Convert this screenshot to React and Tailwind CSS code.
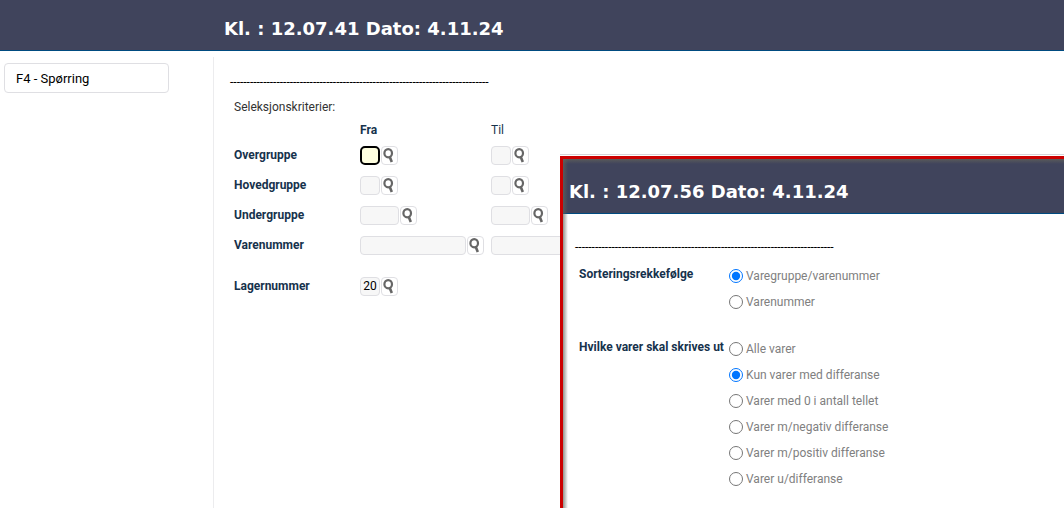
import React, { useState } from 'react';

const DASHES = '-'.repeat(78);

const criteria = [
  { id: 'overgruppe', label: 'Overgruppe', width: 'w-5' },
  { id: 'hovedgruppe', label: 'Hovedgruppe', width: 'w-5' },
  { id: 'undergruppe', label: 'Undergruppe', width: 'w-[39px]' },
  { id: 'varenummer', label: 'Varenummer', width: 'w-[106px]' },
];

const sortOptions = ['Varegruppe/varenummer', 'Varenummer'];

const itemOptions = [
  'Alle varer',
  'Kun varer med differanse',
  'Varer med 0 i antall tellet',
  'Varer m/negativ differanse',
  'Varer m/positiv differanse',
  'Varer u/differanse',
];

function Header({ title, className }) {
  return (
    <header className={`border-b border-[#004b80] bg-[#40445c] text-white ${className}`}>
      <h1 className="font-['DejaVu_Sans',sans-serif] text-lg leading-6 font-bold whitespace-nowrap">{title}</h1>
    </header>
  );
}

function SearchIcon() {
  return (
    <svg viewBox="0 0 15 17" className="h-[17px] w-[15px]" fill="none" stroke="#666">
      <ellipse cx="6.2" cy="6.2" rx="3.8" ry="4.1" strokeWidth="2.2" />
      <path d="M7.6 9.6 L9.8 15" strokeWidth="2.6" />
    </svg>
  );
}

function LookupField({ id, label, width, value = '', active = false }) {
  const [text, setText] = useState(value);

  return (
    <div className="flex items-center gap-px">
      <input
        id={id}
        aria-label={label}
        value={text}
        onChange={(e) => setText(e.target.value)}
        className={`h-[19px] shrink-0 text-center text-xs text-black outline-none ${width} ${
          active ? 'rounded-[5px] border-2 border-black bg-[#ffffe0]' : 'rounded border border-[#dfdfe3] bg-[#f7f7f7]'
        }`}
      />
      <button
        type="button"
        aria-label={`Søk ${label}`}
        className="flex h-[19px] w-[17px] shrink-0 items-center justify-center rounded border border-[#dfdfe3] bg-white"
      >
        <SearchIcon />
      </button>
    </div>
  );
}

function RadioGroup({ name, label, options, value, onChange }) {
  return (
    <div role="radiogroup" aria-label={label} className="flex">
      <div className="w-[150px] shrink-0 pt-[3px] leading-4 font-bold whitespace-nowrap text-[#16324c]">{label}</div>
      <div>
        {options.map((option) => (
          <label key={option} className="flex h-[26px] items-center gap-[3px] whitespace-nowrap text-[#808080]">
            <input
              type="radio"
              name={name}
              checked={value === option}
              onChange={() => onChange(option)}
              className="m-0 h-[14px] w-[14px] accent-[#0075ff]"
            />
            {option}
          </label>
        ))}
      </div>
    </div>
  );
}

function PrintDialog() {
  const [sort, setSort] = useState('Varegruppe/varenummer');
  const [items, setItems] = useState('Kun varer med differanse');

  return (
    <section className="absolute top-[154px] right-0 bottom-0 left-[560px] overflow-hidden border-t border-[#d5d5d8] bg-white pt-px">
      <div className="relative h-full border-t-[3px] border-l-[3px] border-[#cc0000]">
        <Header title="Kl. : 12.07.56 Dato: 4.11.24" className="pt-[21px] pb-[9px] pl-[6px]" />
        <div className="pt-[25px] pl-3">
          <div className="h-4 leading-4 whitespace-nowrap text-black">{DASHES}</div>
          <div className="flex flex-col gap-[21px] pt-2 pl-1">
            <RadioGroup name="sort" label="Sorteringsrekkefølge" options={sortOptions} value={sort} onChange={setSort} />
            <RadioGroup name="items" label="Hvilke varer skal skrives ut" options={itemOptions} value={items} onChange={setItems} />
          </div>
        </div>
        {/* Inner shadow along the frame */}
        <div className="pointer-events-none absolute inset-x-0 top-0 h-[5px] bg-linear-to-b from-[#64645ab0] to-transparent" />
        <div className="pointer-events-none absolute inset-y-0 left-0 w-[5px] bg-linear-to-r from-[#64645ab0] to-transparent" />
      </div>
    </section>
  );
}

function App() {
  return (
    <div className="relative flex min-h-screen flex-col overflow-hidden bg-white font-[Roboto,sans-serif] text-xs text-[#333]">
      <Header title="Kl. : 12.07.41 Dato: 4.11.24" className="pt-[17px] pb-[9px] pl-56" />
      <div className="flex flex-1 pt-[6px]">
        <nav className="w-[213px] shrink-0 pt-[6px] pl-1">
          <button
            type="button"
            className="h-[30px] w-[165px] rounded border border-[#dfdfe3] bg-white pt-px pl-[11px] text-left text-[13px] text-black"
          >
            F4 - Spørring
          </button>
        </nav>

        <main className="flex-1 border-l border-[#ececee] pt-[17px] pl-4">
          <div className="h-4 leading-4 whitespace-nowrap text-black">{DASHES}</div>
          <form className="pt-[9px] pl-1">
            <div className="h-[23px] leading-4">Seleksjonskriterier:</div>
            <div className="grid h-[18px] grid-cols-[126px_131px_1fr] leading-4 text-[#16324c]">
              <span className="col-start-2 font-bold">Fra</span>
              <span>Til</span>
            </div>
            {criteria.map(({ id, label, width }) => (
              <div key={id} className="grid h-[30px] grid-cols-[126px_131px_1fr] items-center">
                <label htmlFor={`${id}-fra`} className="font-bold text-[#16324c]">
                  {label}
                </label>
                <LookupField id={`${id}-fra`} label={`${label} fra`} width={width} active={id === 'overgruppe'} />
                <LookupField id={`${id}-til`} label={`${label} til`} width={width} />
              </div>
            ))}
            <div className="mt-[11px] grid h-[30px] grid-cols-[126px_131px_1fr] items-center">
              <label htmlFor="lagernummer" className="font-bold text-[#16324c]">
                Lagernummer
              </label>
              <LookupField id="lagernummer" label="Lagernummer" width="w-5" value="20" />
            </div>
          </form>
        </main>
      </div>

      <PrintDialog />
    </div>
  );
}

export default App;
